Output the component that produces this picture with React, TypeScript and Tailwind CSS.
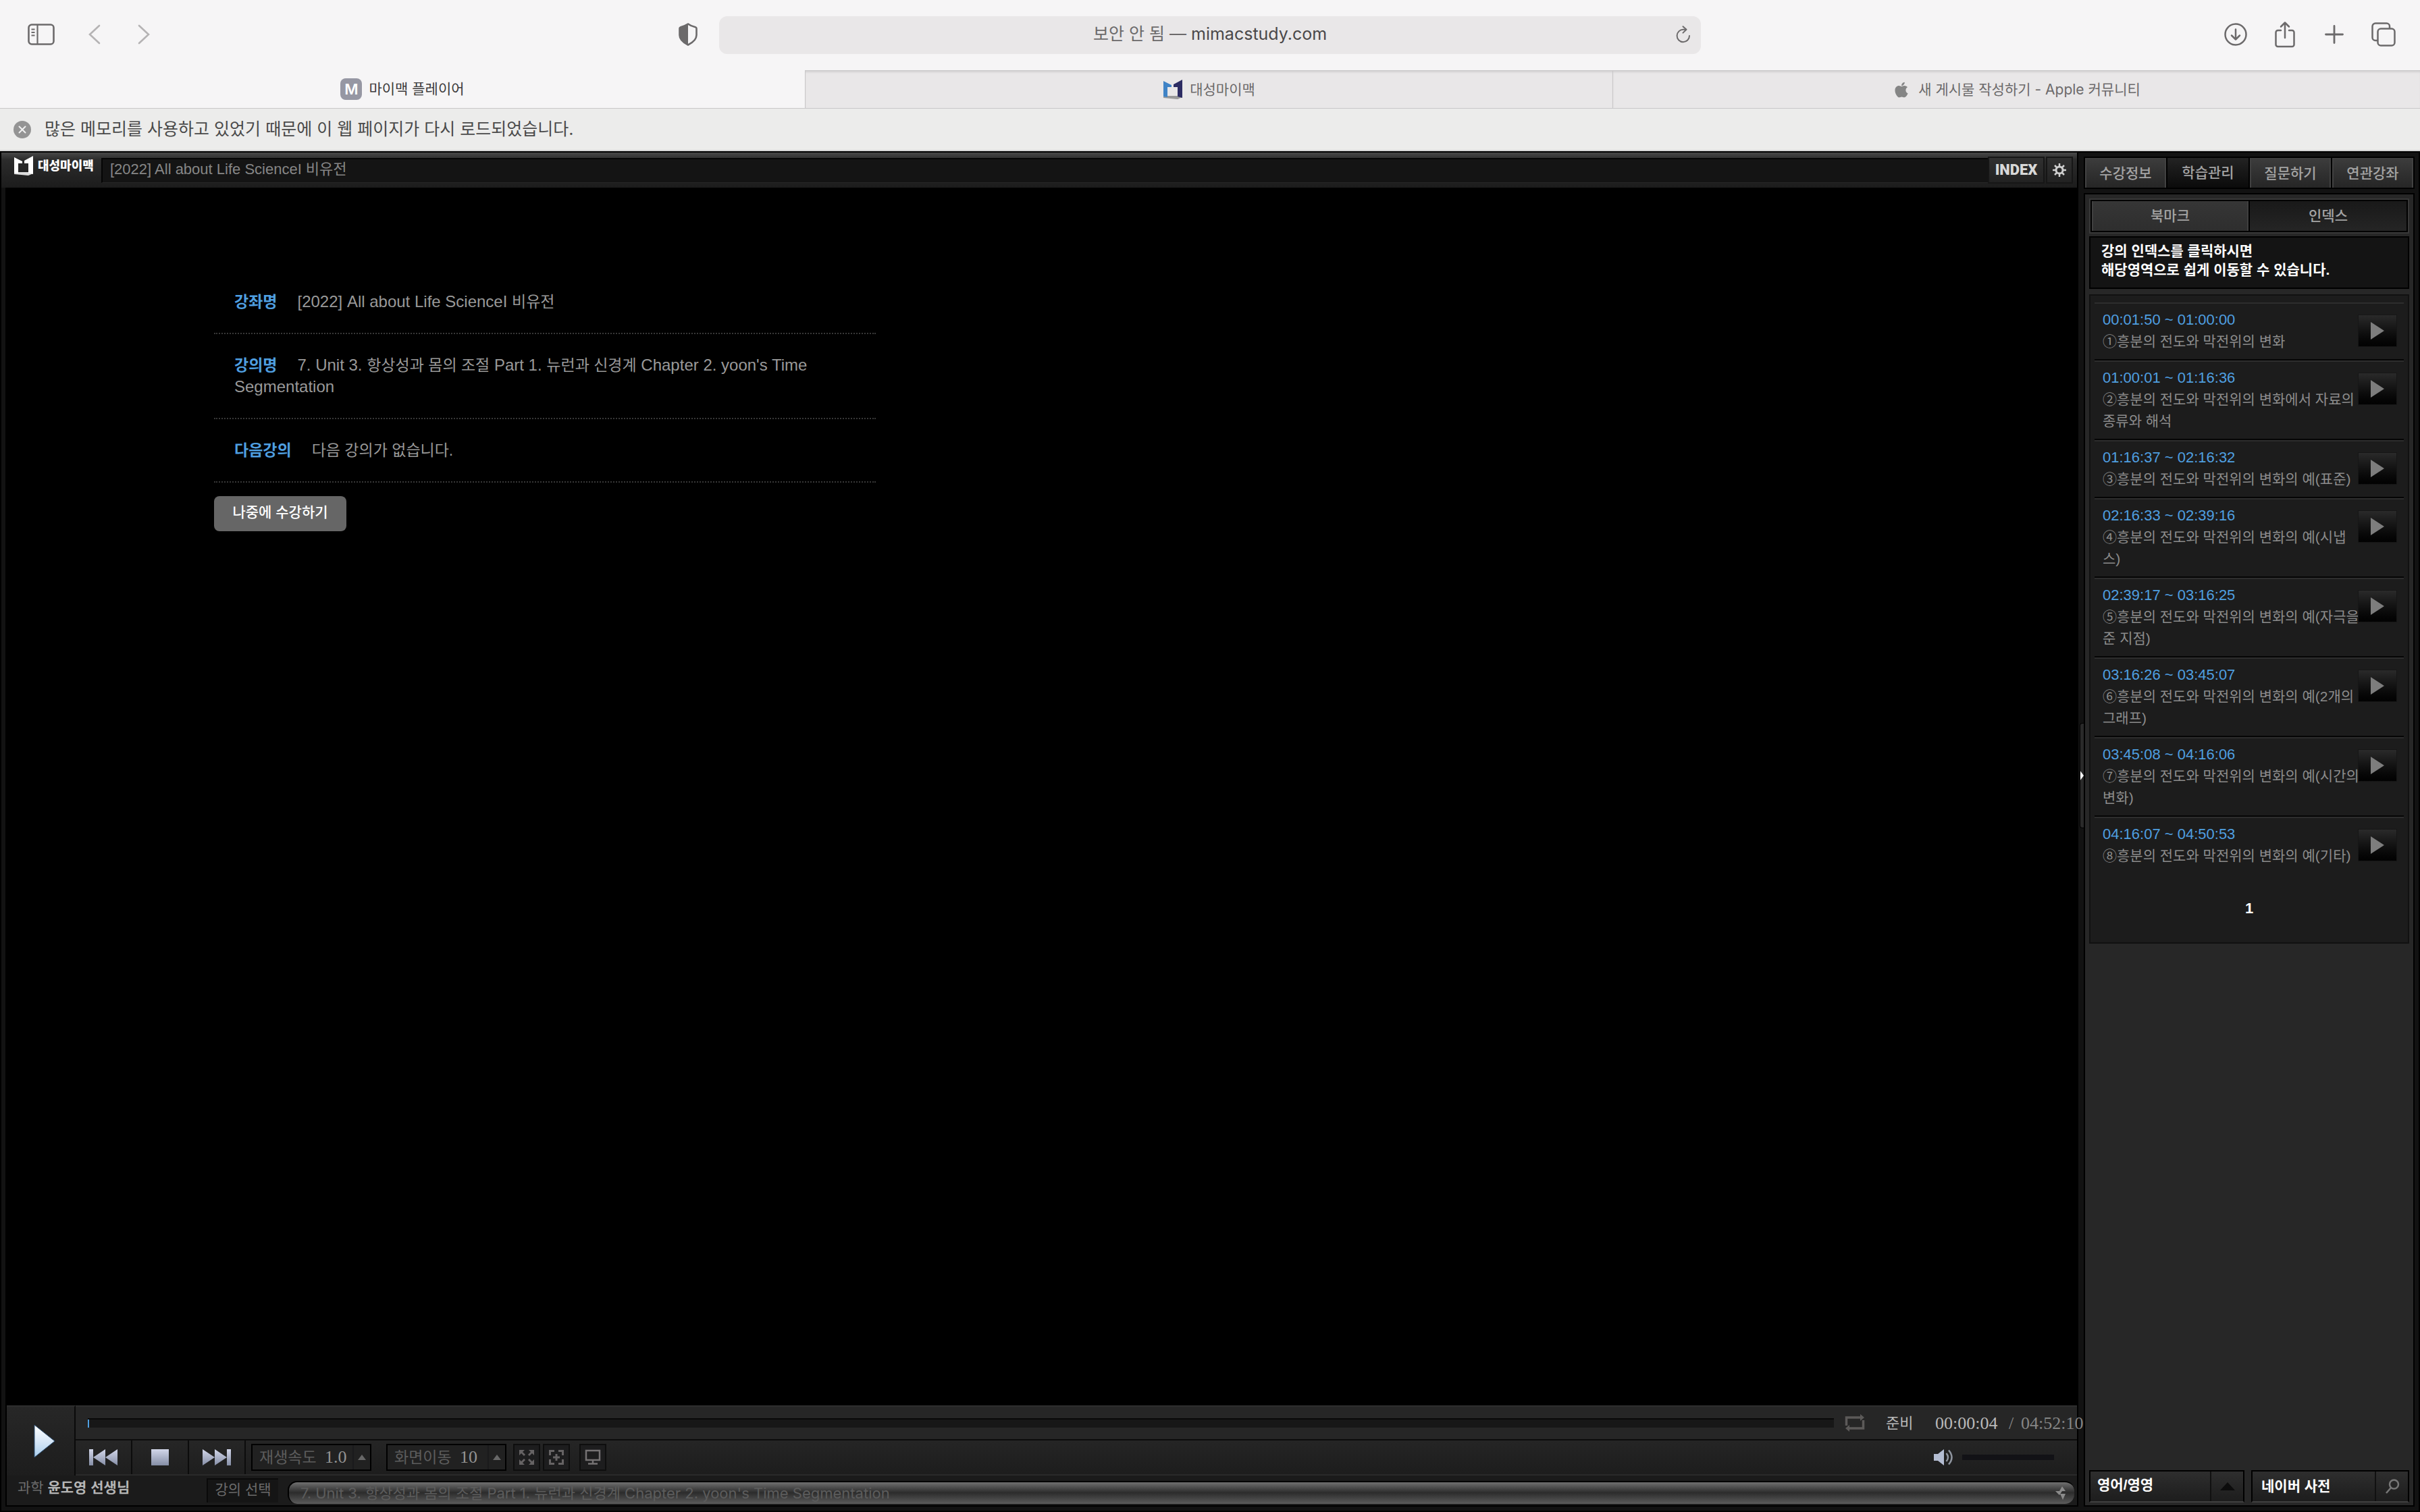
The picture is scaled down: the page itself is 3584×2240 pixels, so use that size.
import { useState, type ReactNode } from 'react';
import { FaApple } from 'react-icons/fa';

const topTabs = ['수강정보', '학습관리', '질문하기', '연관강좌'];
const subTabs = ['북마크', '인덱스'];

const lectureTitle =
  "7. Unit 3. 항상성과 몸의 조절 Part 1. 뉴런과 신경계 Chapter 2. yoon's Time Segmentation";

const indexList = [
  { time: '00:01:50 ~ 01:00:00', lines: ['①흥분의 전도와 막전위의 변화'] },
  {
    time: '01:00:01 ~ 01:16:36',
    lines: ['②흥분의 전도와 막전위의 변화에서 자료의', '종류와 해석'],
  },
  { time: '01:16:37 ~ 02:16:32', lines: ['③흥분의 전도와 막전위의 변화의 예(표준)'] },
  {
    time: '02:16:33 ~ 02:39:16',
    lines: ['④흥분의 전도와 막전위의 변화의 예(시냅', '스)'],
  },
  {
    time: '02:39:17 ~ 03:16:25',
    lines: ['⑤흥분의 전도와 막전위의 변화의 예(자극을', '준 지점)'],
  },
  {
    time: '03:16:26 ~ 03:45:07',
    lines: ['⑥흥분의 전도와 막전위의 변화의 예(2개의', '그래프)'],
  },
  {
    time: '03:45:08 ~ 04:16:06',
    lines: ['⑦흥분의 전도와 막전위의 변화의 예(시간의', '변화)'],
  },
  { time: '04:16:07 ~ 04:50:53', lines: ['⑧흥분의 전도와 막전위의 변화의 예(기타)'] },
];

function ToolButton({ label, children }: { label: string; children: ReactNode }) {
  return (
    <button type="button" aria-label={label} className="flex h-14 w-[73px] items-center justify-center pb-0.5">
      {children}
    </button>
  );
}

function BookMark({ left, right, base }: { left: string; right: string; base: string }) {
  return (
    <svg width="30" height="30" viewBox="0 0 30 30">
      <path d="M1 24H22L29 26L22 29L1 27Z" fill={base} />
      <path d="M1 2L13 8V11H7V26L1 25Z" fill={left} />
      <path d="M29 0L16 7V11H22V25L29 27Z" fill={right} />
    </svg>
  );
}

function BrowserChrome() {
  return (
    <div className="font-['Inter','Noto_Sans_CJK_KR',sans-serif]">
      <div className="grid h-[104px] grid-cols-[1fr_1454px_1fr] items-center bg-[#f6f5f6] text-[#6c6a6b]">
        <div className="flex items-center pl-6">
          <ToolButton label="사이드바">
            <svg width="40" height="32" viewBox="0 0 40 32" fill="none" stroke="currentColor">
              <rect x="1.5" y="1.5" width="37" height="29" rx="4.5" strokeWidth="2.6" />
              <path d="M14.5 2v28" strokeWidth="2.2" />
              <path d="M5.5 8.5h5M5.5 13h5M5.5 17.500h5" strokeWidth="2" />
            </svg>
          </ToolButton>
          <div className="flex pl-1.5 text-[#b5b3b4]">
            <ToolButton label="뒤로">
              <svg width="18" height="30" viewBox="0 0 18 30" fill="none" stroke="currentColor" strokeWidth="2.6" strokeLinecap="round">
                <path d="M16 2L2 15l14 13" />
              </svg>
            </ToolButton>
            <ToolButton label="앞으로">
              <svg width="18" height="30" viewBox="0 0 18 30" fill="none" stroke="currentColor" strokeWidth="2.6" strokeLinecap="round">
                <path d="M2 2l14 13L2 28" />
              </svg>
            </ToolButton>
          </div>
          <button type="button" aria-label="개인정보 보호 리포트" className="mr-8 ml-auto pb-0.5">
            <svg width="28" height="34" viewBox="0 0 28 34">
              <path
                d="M14 1.500C10 4.500 6 5.500 3 6.200C2 6.500 1.500 7 1.500 8V18C1.500 25 8 29.500 14 32.500C20 29.500 26.500 25 26.500 18V8C26.500 7 26 6.500 25 6.200C22 5.500 18 4.500 14 1.500Z"
                fill="none"
                stroke="currentColor"
                strokeWidth="2.6"
              />
              <path d="M14 1.500C10 4.500 6 5.500 3 6.200C2 6.500 1.500 7 1.500 8V18C1.500 25 8 29.500 14 32.500Z" fill="currentColor" />
            </svg>
          </button>
        </div>

        <div className="grid h-14 grid-cols-[56px_1fr_56px] items-center rounded-xl bg-[#e9e7e8] pb-0.5">
          <p className="col-start-2 text-center text-[25px] text-[#4a4849]">
            <span className="text-[#6c6a6b]">보안 안 됨 — </span>mimacstudy.com
          </p>
          <button type="button" aria-label="새로 고침" className="flex justify-center pl-1">
            <svg width="22" height="26" viewBox="0 0 22 26" fill="none" stroke="currentColor" strokeWidth="2" strokeLinecap="round" strokeLinejoin="round">
              <path d="M20 15a9.200 9.200 0 1 1-9-9.200h4" />
              <path d="M10.500 1.200l5 4.600-5 4.800" />
            </svg>
          </button>
        </div>

        <div className="flex items-center justify-end pr-[18px]">
          <ToolButton label="다운로드">
            <svg width="34" height="34" viewBox="0 0 34 34" fill="none" stroke="currentColor" strokeWidth="2.5" strokeLinecap="round" strokeLinejoin="round">
              <circle cx="17" cy="17" r="15.500" />
              <path d="M17 9.500v15M11 18.500l6 6 6-6" />
            </svg>
          </ToolButton>
          <ToolButton label="공유">
            <svg width="32" height="40" viewBox="0 0 32 40" fill="none" stroke="currentColor" strokeWidth="2.500" strokeLinecap="round" strokeLinejoin="round">
              <path d="M10 14H5.500a3 3 0 0 0-3 3v18a3 3 0 0 0 3 3h21a3 3 0 0 0 3-3V17a3 3 0 0 0-3-3H22" />
              <path d="M16 25V3M10 8.500L16 2.500l6 6" />
            </svg>
          </ToolButton>
          <ToolButton label="새 탭">
            <svg width="28" height="28" viewBox="0 0 28 28" fill="none" stroke="currentColor" strokeWidth="2.800" strokeLinecap="round">
              <path d="M14 1.500v25M1.500 14h25" />
            </svg>
          </ToolButton>
          <ToolButton label="탭 개요">
            <svg width="36" height="36" viewBox="0 0 36 36" fill="none" stroke="currentColor" strokeWidth="2.500" strokeLinejoin="round">
              <rect x="9.500" y="9.500" width="25" height="25" rx="4.500" />
              <path d="M9.500 27H6a4.500 4.500 0 0 1-4.500-4.500V6A4.500 4.500 0 0 1 6 1.500h16.500A4.500 4.500 0 0 1 27 6v3.500" />
            </svg>
          </ToolButton>
        </div>
      </div>

      <div className="grid h-[57px] grid-cols-[1192fr_1196fr_1196fr] border-b border-[#c8c7c8] bg-[#f6f5f6] text-[21px] text-[#6c6a6b]">
        <div className="flex items-center justify-center gap-2.5 text-[#3c3b3c]">
          <span className="flex size-8 items-center justify-center rounded-lg bg-[#9697a3] text-[22px] font-semibold text-white">
            M
          </span>
          마이맥 플레이어
        </div>
        <div className="flex items-center justify-center gap-2.5 border-t border-l border-[#c8c7c8] bg-[#e9e7e8] shadow-[inset_0_3px_3px_-1px_#d2d0d1]">
          <BookMark left="#3f83c6" right="#2d2c63" base="#9a9a9a" />
          대성마이맥
        </div>
        <div className="flex items-center justify-center gap-3 border-t border-l border-[#c8c7c8] bg-[#e9e7e8] shadow-[inset_0_3px_3px_-1px_#d2d0d1]">
          <FaApple size={26} color="#858585" />
          새 게시물 작성하기 - Apple 커뮤니티
        </div>
      </div>

      <div className="flex h-[63px] items-center gap-5 border-b-2 border-[#d6d6d6] bg-[#ececeb] pl-5 text-[25px] text-[#4a4a4a]">
        <button type="button" aria-label="닫기" className="flex size-[26px] items-center justify-center rounded-full bg-[#949494]">
          <svg width="12" height="12" viewBox="0 0 12 12" stroke="#f0f0f0" strokeWidth="2" strokeLinecap="round">
            <path d="M1.500 1.500l9 9M10.500 1.500l-9 9" />
          </svg>
        </button>
        <p>많은 메모리를 사용하고 있었기 때문에 이 웹 페이지가 다시 로드되었습니다.</p>
      </div>
    </div>
  );
}

function PlayerHeader() {
  return (
    <header className="flex h-[52px] items-center border-r-2 border-black bg-linear-to-b from-[#484848] via-[#2c2c2c] via-20% to-[#1c1c1c]">
      <div className="flex w-[148px] items-center gap-1.5 pb-3 pl-[18px] text-white">
        <BookMark left="#ffffff" right="#ffffff" base="#dddddd" />
        <span className="text-[18px] leading-none font-black whitespace-nowrap">대성마이맥</span>
      </div>
      <div className="flex h-[37px] flex-1 items-center border-t-2 border-b border-l-2 border-t-[#050505] border-b-[#262626] border-l-[#050505] bg-[#141414] pb-1 pl-[11px] text-[22px] text-[#868686]">
        [2022] All about Life ScienceI 비유전
      </div>
      <button
        type="button"
        className="h-10 w-[84px] border-2 border-[#161616] bg-linear-to-b from-[#303030] to-[#222] font-['Roboto',sans-serif] text-[22px] leading-none font-black text-[#d8d8d8]"
      >
        INDEX
      </button>
      <button
        type="button"
        aria-label="설정"
        className="mr-1.5 ml-0.5 flex h-10 w-10 items-center justify-center border-2 border-[#161616] bg-linear-to-b from-[#303030] to-[#222]"
      >
        <svg width="22" height="22" viewBox="0 0 22 22" fill="none" stroke="#d0d0d0">
          <circle cx="11" cy="11" r="5" strokeWidth="3" />
          <path d="M11 1v4M11 17v4M1 11h4M17 11h4M4 4l3 3M15 15l3 3M4 18l3-3M15 7l3-3" strokeWidth="2.500" />
        </svg>
      </button>
    </header>
  );
}

function LectureInfo() {
  return (
    <div className="ml-[307px] w-[980px] pt-[123px] text-[24px] leading-8 text-[#999]">
      <dl>
        <div className="border-b-2 border-dotted border-[#383838] p-[30px]">
          <dt className="mr-[30px] inline text-[23px] font-bold text-[#4f9fe0]">강좌명</dt>
          <dd className="inline">
            [2022] All about Life ScienceI <span className="text-[23px]">비유전</span>
          </dd>
        </div>
        <div className="border-b-2 border-dotted border-[#383838] p-[30px]">
          <dt className="mr-[30px] inline text-[23px] font-bold text-[#4f9fe0]">강의명</dt>
          <dd className="inline">
            7. Unit 3. <span className="text-[23px]">항상성과 몸의 조절</span> Part 1.{' '}
            <span className="text-[23px]">뉴런과 신경계</span> Chapter 2. yoon's Time Segmentation
          </dd>
        </div>
        <div className="border-b-2 border-dotted border-[#383838] p-[30px]">
          <dt className="mr-[30px] inline text-[23px] font-bold text-[#4f9fe0]">다음강의</dt>
          <dd className="inline text-[23px]">다음 강의가 없습니다.</dd>
        </div>
      </dl>
      <button type="button" className="mt-5 h-[52px] w-[196px] rounded-lg bg-[#666] pb-1 text-[21px] font-medium text-white">
        나중에 수강하기
      </button>
    </div>
  );
}

function TransportButton({ label, children }: { label: string; children: ReactNode }) {
  return (
    <button
      type="button"
      aria-label={label}
      className="flex h-full w-[84px] items-center justify-center border-r-2 border-[#0c0c0c] bg-linear-to-b from-[#262626] to-[#1e1e1e]"
    >
      {children}
    </button>
  );
}

function StepSelect({ id, label, value }: { id: string; label: string; value: string }) {
  return (
    <div className="flex h-10 w-[178px] items-center border-2 border-black bg-[#212121] pl-2.5">
      <label htmlFor={id} className="w-[97px] text-[23px] leading-none whitespace-nowrap text-[#5c5c5c]">
        {label}
      </label>
      <select
        id={id}
        className="min-w-0 flex-1 appearance-none font-['Liberation_Serif',serif] text-[26px] leading-8 text-[#939393]"
      >
        <option>{value}</option>
      </select>
      <span className="flex h-full w-[26px] items-center justify-center border-l-2 border-[#1a1a1c]">
        <svg width="12" height="8" viewBox="0 0 12 8" fill="#686868">
          <path d="M6 0l6 8H0z" />
        </svg>
      </span>
    </div>
  );
}

function ViewButton({ label, children }: { label: string; children: ReactNode }) {
  return (
    <button type="button" aria-label={label} className="flex size-10 items-center justify-center border-2 border-[#0e0e0e] bg-[#1d1d1e]">
      {children}
    </button>
  );
}

function PlayerControls() {
  return (
    <div className="bg-[#1b1b1b]">
      <div className="flex h-[104px]">
        <button
          type="button"
          aria-label="재생"
          className="flex w-[102px] items-center justify-center border-t-2 border-r-2 border-t-[#2e2e2e] border-r-[#0a0a0a] bg-linear-to-b from-[#272727] to-[#1d1d1d] pl-3"
        >
          <svg width="36" height="54" viewBox="0 0 36 54">
            <defs>
              <linearGradient id="play" x1="0" y1="0" x2="0" y2="1">
                <stop offset="0" stopColor="#ffffff" />
                <stop offset="0.5" stopColor="#d8e8f8" />
                <stop offset="1" stopColor="#a9cdec" />
              </linearGradient>
            </defs>
            <path d="M3 3v48l30-24z" fill="url(#play)" stroke="#2a4d70" strokeWidth="1" />
          </svg>
        </button>

        <div className="flex-1">
          <div className="flex h-[50px] items-center border-t-2 border-[#2e2e2e] bg-[#262626] pl-[18px]">
            <input
              type="range"
              aria-label="재생 위치"
              defaultValue={0}
              className="h-3.5 min-w-0 flex-1 appearance-none border-t-2 border-[#0a0a0a] bg-[#171717] [&::-webkit-slider-thumb]:h-3 [&::-webkit-slider-thumb]:w-0.5 [&::-webkit-slider-thumb]:appearance-none [&::-webkit-slider-thumb]:bg-[#4f9fe0]"
            />
            <div className="relative z-10 flex w-[360px] items-center pl-4 text-[22px] whitespace-nowrap text-[#b9b9b9]">
              <button type="button" aria-label="구간 반복" className="mr-[31px] shrink-0">
                <svg width="30" height="28" viewBox="0 0 30 28" fill="none" stroke="#5c5a59" strokeWidth="3.500">
                  <path d="M2.500 18V6H26M27.500 10v12H4" />
                  <path d="M23 1l6 5-6 5zM7 17l-6 5 6 5z" fill="#5c5a59" stroke="none" />
                </svg>
              </button>
              <span className="w-[73px] shrink-0">준비</span>
              <span className="w-[109px] shrink-0 font-['Liberation_Serif',serif] text-[26px]">00:00:04</span>
              <span className="w-[18px] shrink-0 font-['Liberation_Serif',serif] text-[26px] text-[#858585]">/</span>
              <span className="shrink-0 font-['Liberation_Serif',serif] text-[26px] text-[#858585]">04:52:10</span>
            </div>
          </div>

          <div className="flex h-[54px] items-center border-t-2 border-b-2 border-t-[#0c0c0c] border-b-[#2a2a2a] bg-linear-to-b from-[#252525] to-[#1d1d1d]">
            <TransportButton label="이전 강의">
              <svg width="44" height="26" viewBox="0 0 44 26" fill="url(#steel)">
                <defs>
                  <linearGradient id="steel" x1="0" y1="0" x2="0" y2="1">
                    <stop offset="0" stopColor="#d3d7ea" />
                    <stop offset="1" stopColor="#858ea6" />
                  </linearGradient>
                </defs>
                <path d="M1 1h6v24H1zM7 13L25 1v24zM25 13L43 1v24z" />
              </svg>
            </TransportButton>
            <TransportButton label="정지">
              <svg width="28" height="26" viewBox="0 0 28 26" fill="url(#steel)">
                <path d="M1 1h26v24H1z" />
              </svg>
            </TransportButton>
            <TransportButton label="다음 강의">
              <svg width="44" height="26" viewBox="0 0 44 26" fill="url(#steel)">
                <path d="M37 1h6v24h-6zM19 1l18 12-18 12zM1 1l18 12L1 25z" />
              </svg>
            </TransportButton>
            <div className="flex items-center gap-[22px] pl-2">
              <StepSelect id="speed" label="재생속도" value="1.0" />
              <StepSelect id="seek" label="화면이동" value="10" />
            </div>
            <div className="flex items-center gap-1 pl-2.5">
              <ViewButton label="전체 화면">
                <svg width="24" height="24" viewBox="0 0 24 24" fill="#666364">
                  <path d="M1 1h8L6 4l4 4-2 2-4-4-3 3zM23 1v8l-3-3-4 4-2-2 4-4-3-3zM1 23v-8l3 3 4-4 2 2-4 4 3 3zM23 23h-8l3-3-4-4 2-2 4 4 3-3z" />
                </svg>
              </ViewButton>
              <ViewButton label="원본 크기">
                <svg width="24" height="24" viewBox="0 0 24 24" fill="none" stroke="#666364" strokeWidth="3">
                  <path d="M9 2.500H2.500V9M15 2.500h6.500V9M9 21.500H2.500V15M15 21.500h6.500V15M12 7v10M7 12h10" />
                </svg>
              </ViewButton>
            </div>
            <div className="pl-3.5">
              <ViewButton label="화면 모드">
                <svg width="24" height="24" viewBox="0 0 24 24" fill="none" stroke="#757273" strokeWidth="2.500">
                  <path d="M2 2h20v14H2zM12 16v5M5 21.500h14" />
                </svg>
              </ViewButton>
            </div>
            <div className="ml-auto flex items-center gap-3 pr-[34px]">
              <button type="button" aria-label="음소거">
                <svg width="30" height="24" viewBox="0 0 30 24">
                  <path d="M0 7h6l9-7v24l-9-7H0z" fill="#b4bdd2" />
                  <path d="M18.500 6q5 6 0 12M22 1.500q9 10.500 0 21" fill="none" stroke="#8f959f" strokeWidth="2.500" />
                </svg>
              </button>
              <input
                type="range"
                aria-label="음량"
                defaultValue={0}
                className="h-2 w-[136px] appearance-none bg-[#121216] [&::-webkit-slider-thumb]:size-0 [&::-webkit-slider-thumb]:appearance-none"
              />
            </div>
          </div>
        </div>
      </div>

      <div className="flex h-11 items-start pl-4">
        <p className="w-[280px] pt-1 text-[21px] leading-7 text-[#6b6b6b]">
          과학 <strong className="text-[#b5b5b5]">윤도영 선생님</strong>
        </p>
        <label
          htmlFor="lecture"
          className="mt-1 mr-3.5 flex h-9 w-[106px] items-center justify-center border-t-2 border-l-2 border-[#0a0a0a] bg-[#151515] pb-1 text-[21px] whitespace-nowrap text-[#6b6b6b]"
        >
          강의 선택
        </label>
        <div className="relative mt-2 mr-1 min-w-0 flex-1">
          <select
            id="lecture"
            className="block h-[34px] w-full appearance-none rounded-[14px] border-t-2 border-l-2 border-black bg-linear-to-b from-[#707070] via-[#2c2c2c] via-48% to-[#5c5c5c] pl-[17px] font-['Inter','Noto_Sans_CJK_KR',sans-serif] text-[22px] leading-8 text-[#5c5c5c]"
          >
            <option>{lectureTitle}</option>
          </select>
          <svg className="pointer-events-none absolute top-2 right-3" width="16" height="20" viewBox="0 0 16 20" fill="#8b8b8b">
            <path d="M10 0l5 7H6zM0 7h10l-4 6zM7 11h8l-4 9z" />
          </svg>
        </div>
      </div>
    </div>
  );
}

function IndexItem({ time, lines }: { time: string; lines: string[] }) {
  return (
    <li className="flex items-start border-t-2 border-b-2 border-t-[#2d2d2d] border-b-[#050505] pt-2 pb-2.5 pl-3 last:border-b-0">
      <div className="w-[378px] whitespace-nowrap">
        <p className="text-[22px] leading-8 text-[#4f9fe0]">{time}</p>
        {lines.map((line) => (
          <p key={line} className="text-[21px] leading-8 text-[#8c8c8c]">
            {line}
          </p>
        ))}
      </div>
      <button
        type="button"
        aria-label={`${time} 재생`}
        className="mt-2 flex h-12 w-[58px] items-center justify-center border border-[#161616] bg-linear-to-b from-[#2a2a2a] to-[#020202]"
      >
        <svg width="22" height="28" viewBox="0 0 22 28" fill="#7d7d7d">
          <path d="M1 1l20 13L1 27z" />
        </svg>
      </button>
    </li>
  );
}

function SidePanel() {
  const [tab, setTab] = useState(1);
  const [subTab, setSubTab] = useState(1);

  return (
    <aside className="relative z-20 mr-1.5 flex w-[490px] flex-col gap-1.5 pt-1.5">
      <nav className="grid h-12 grid-cols-4 gap-0.5 border-2 border-black bg-black text-[21px] font-medium text-[#a3a3a3]">
        {topTabs.map((name, i) => (
          <button
            key={name}
            type="button"
            onClick={() => setTab(i)}
            className={
              tab === i
                ? 'bg-linear-to-b from-[#232323] to-[#0b0b0b]'
                : 'border-x-2 border-t border-[#414141] bg-linear-to-b from-[#3c3c3c] to-[#262626]'
            }
          >
            {name}
          </button>
        ))}
      </nav>

      <div className="flex flex-1 flex-col border-2 border-black bg-[#272727] px-1.5 pt-1.5 pb-1">
        <div className="h-[52px] border-2 border-[#383838] bg-black p-0.5">
          <div className="grid h-full grid-cols-2 gap-0.5 text-[21px] font-medium text-[#a3a3a3]">
            {subTabs.map((name, i) => (
              <button
                key={name}
                type="button"
                onClick={() => setSubTab(i)}
                className={
                  subTab === i
                    ? 'bg-linear-to-b from-[#191919] to-[#252525]'
                    : 'border-x-2 border-[#404040] bg-linear-to-b from-[#363636] to-[#2e2e2e]'
                }
              >
                {name}
              </button>
            ))}
          </div>
        </div>

        <p className="mt-1 h-[78px] border-2 border-black bg-[#141414] px-4 pt-1.5 text-[21px] leading-7 font-bold text-white">
          강의 인덱스를 클릭하시면
          <br />
          해당영역으로 쉽게 이동할 수 있습니다.
        </p>

        <div className="mt-2 border-2 border-[#111] bg-[#1c1c1c] px-1.5 pt-2.5">
          <ul>
            {indexList.map((item) => (
              <IndexItem key={item.time} time={item.time} lines={item.lines} />
            ))}
          </ul>
          <div className="flex h-[102px] items-center justify-center">
            <button type="button" className="text-[22px] font-bold text-white">
              1
            </button>
          </div>
        </div>

        <div className="mt-auto grid grid-cols-[230px_1fr] gap-2.5 text-[21px] font-bold text-white">
          <div className="flex h-12 border-2 border-black border-b-[#404040] bg-linear-to-b from-[#2e2e2e] to-[#1d1d1d]">
            <select aria-label="사전 종류" className="min-w-0 flex-1 appearance-none pb-1 pl-2.5">
              <option>영어/영영</option>
            </select>
            <span className="flex w-[49px] items-center justify-center border-l-2 border-[#111]">
              <svg width="22" height="12" viewBox="0 0 22 12" fill="#0c0c0c">
                <path d="M11 0l11 12H0z" />
              </svg>
            </span>
          </div>
          <div className="flex h-12 min-w-0 border-2 border-black border-b-[#404040] bg-linear-to-b from-[#2e2e2e] to-[#1d1d1d]">
            <input
              type="text"
              aria-label="사전 검색"
              placeholder="네이버 사전"
              className="min-w-0 flex-1 pl-[13px] placeholder:text-white placeholder:opacity-100"
            />
            <button type="button" aria-label="검색" className="flex w-[49px] items-center justify-center border-l-2 border-[#111]">
              <svg width="22" height="22" viewBox="0 0 22 22" fill="none" stroke="#777" strokeWidth="2.500">
                <circle cx="13.500" cy="8" r="6.500" />
                <path d="M9 13l-7 8" />
              </svg>
            </button>
          </div>
        </div>
      </div>
    </aside>
  );
}

export default function App() {
  return (
    <div className="flex min-h-screen flex-col bg-black font-['Liberation_Sans','Noto_Sans_CJK_KR',sans-serif]">
      <BrowserChrome />
      <div className="flex flex-1 border-2 border-black bg-[#121212] pb-1.5">
        <main className="relative z-10 flex min-w-0 flex-1 flex-col">
          <PlayerHeader />
          <div className="ml-1.5 flex flex-1 flex-col border-r-2 border-b-2 border-l-2 border-black bg-black">
            <div className="flex-1">
              <LectureInfo />
            </div>
            <PlayerControls />
          </div>
        </main>
        <div className="flex w-2 flex-col justify-center pl-0.5">
          <button type="button" aria-label="패널 접기" className="mb-40 flex h-[156px] items-center rounded-l border border-r-0 border-black bg-[#2a2a2a]">
            <svg width="6" height="16" viewBox="0 0 6 16" fill="#fff">
              <path d="M0 0l6 8-6 8z" />
            </svg>
          </button>
        </div>
        <SidePanel />
      </div>
    </div>
  );
}
